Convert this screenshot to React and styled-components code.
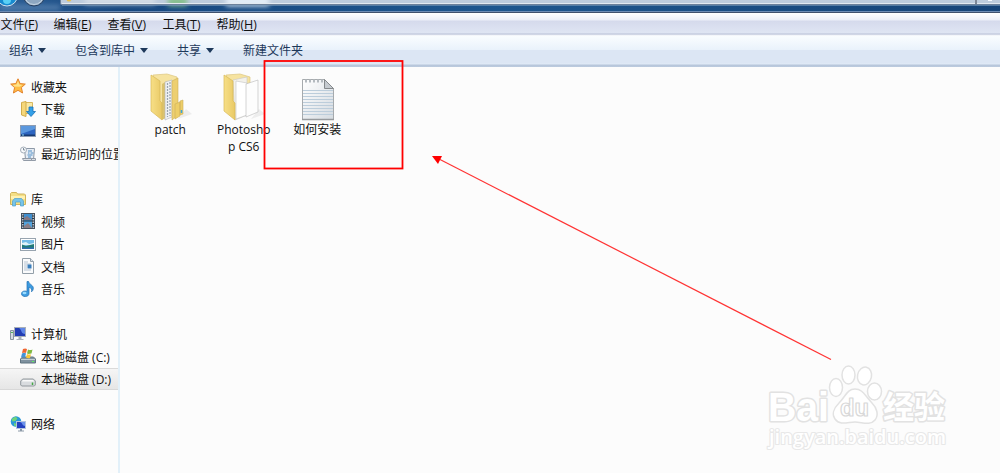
import React from 'react';
import styled, { createGlobalStyle } from 'styled-components';

const GlobalStyle = createGlobalStyle`
  * { box-sizing: border-box; }
  body {
    margin: 0;
    overflow: hidden;
    background: #fcfcfc;
    font-family: 'Open Sans', 'Noto Sans CJK SC', sans-serif;
    font-size: 12px;
    color: #111;
  }
  svg { display: block; }
`;

const Window = styled.div`
  position: relative;
  width: 1000px;
  height: 473px;
  display: flex;
  flex-direction: column;
  overflow: hidden;
`;

const TitleBar = styled.header`
  flex: none;
  height: 13px;
`;

const MenuBar = styled.nav`
  flex: none;
  height: 23px;
  display: flex;
  background: linear-gradient(#fff 0, #eceff8 7px, #d5daec 8px, #dfe5f3 20px, #b9c0d6 21px, #e8ecf5 22px, #fff 23px);
`;

const MenuItem = styled.span`
  width: ${({ $width }) => $width}px;
  padding-left: .5px;
  line-height: 24px;
  white-space: nowrap;
  u {
    font-size: 12.5px;
    text-underline-offset: 1px;
  }
`;

const ToolBar = styled.div`
  flex: none;
  height: 31px;
  display: flex;
  padding-left: 9px;
  background: linear-gradient(#fafdff 0, #e9f2fb 14px, #dce6f4 14px, #dce6f4 27px, #e1ebf7 28px, #b6c5da 29px, #bccbdf 31px);
  color: #1e395b;
`;

const ToolItem = styled.span`
  width: ${({ $width }) => $width}px;
  height: 28px;
  display: flex;
  align-items: center;
  gap: 5px;
  white-space: nowrap;
`;

const Caret = styled.i`
  border: 4px solid transparent;
  border-top: 5px solid #1e395b;
  border-bottom: 0;
`;

const Body = styled.div`
  flex: 1;
  display: flex;
  min-height: 0;
`;

const SideBar = styled.aside`
  flex: none;
  width: 120px;
  padding-top: 8px;
  border-right: 2px solid #e2f0f9;
  overflow: hidden;
`;

const Group = styled.section`
  margin-bottom: 22.5px;
`;

const SideRow = styled.div`
  height: 22.5px;
  display: flex;
  align-items: center;
  gap: 5px;
  padding-left: ${({ $child }) => ($child ? 20 : 10)}px;
  white-space: nowrap;
  background: ${({ $selected }) => ($selected ? 'linear-gradient(#f6f6f6, #e5e5e5)' : 'none')};
  box-shadow: ${({ $selected }) => ($selected ? 'inset 0 1px #dadada, inset 0 -1px #d8d8d8' : 'none')};
  svg { flex: none; }
  span { padding-top: 1px; }
`;

const Files = styled.main`
  flex: 1;
  display: flex;
  align-items: flex-start;
  padding: 5px 0 0 14px;
`;

const File = styled.div`
  width: 73.5px;
  display: flex;
  flex-direction: column;
  align-items: center;
  text-align: center;
  line-height: 17px;
`;

const FileName = styled.span`
  width: 60px;
  margin: -1px 1px 0 0;
  white-space: pre-line;
`;

const Overlay = styled.svg`
  position: absolute;
  inset: 0;
`;

const Icon = ({ children }) => <svg width="16" height="16" viewBox="0 0 16 16">{children}</svg>;

const icons = {
  star: (
    <Icon>
      <path d="M8 .8l2.1 4.8 5.2.5-3.9 3.5 1.2 5.4L8 12.3 3.4 15l1.2-5.4L.7 6.1l5.2-.5z" fill="#ffbd45" stroke="#e3832c" />
      <path d="M8 3l1.3 3.6 3.2.4-3 1.8L4 8.5 3 7l3.5-.5z" fill="#ffe38b" />
    </Icon>
  ),
  download: (
    <Icon>
      <path d="M5.5 1.5h7v11h-7z" fill="#fae9a4" stroke="#d6b75f" />
      <path d="M1.5 1.5l4.5-1v15l-4.5-1.5z" fill="#f5d77a" stroke="#d1ad4d" />
      <path d="M9 6h4v4.5h2.5L11 15.5 6.5 10.5H9z" fill="#34a0e8" stroke="#1870b8" strokeWidth=".8" />
    </Icon>
  ),
  desktop: (
    <Icon>
      <rect x=".5" y="2.5" width="15" height="11" fill="#2d65c0" stroke="#8c9cb2" />
      <path d="M1 3h14v3L1 11z" fill="#5b98de" />
      <path d="M1 11.5h14V13H1z" fill="#173a72" />
      <path d="M2 12h2" stroke="#8fdaf5" />
    </Icon>
  ),
  recent: (
    <Icon>
      <path d="M4.5 2.5h10l-1 11h-8z" fill="#e7edf4" stroke="#8d99a7" />
      <path d="M2.5 12.5h9v2h-8z M11.5 12.5h4v2h-4z" fill="#dce1e7" stroke="#929ba7" />
      <circle cx="3.5" cy="4" r="3" fill="#f7f9fb" stroke="#a4aeb9" />
      <path d="M3.5 2v2h1.5" fill="none" stroke="#637384" strokeWidth=".8" />
      <path d="M8 5h4M8 7h1.5m1 0h3M7.5 9h5M8 11h3" stroke="#508fc5" />
    </Icon>
  ),
  library: (
    <Icon>
      <path d="M.5 2.5l1-1h5l1 1.5h7l1 1v9.5H.5z" fill="#f4df86" stroke="#d1b45c" />
      <path d="M1 5h14v3H1z" fill="#fff1b1" />
      <path d="M2.5 15v-5l2-2.5h7l2 2.5v5h-3v-4h-5v4z" fill="#76c3e9" stroke="#4c9fcb" strokeWidth=".7" />
    </Icon>
  ),
  video: (
    <Icon>
      <rect x="1.5" y=".5" width="13" height="15" fill="#283643" stroke="#45515d" />
      <rect x="4" y="1" width="8" height="6.5" fill="#3f8fd0" />
      <rect x="4" y="8.5" width="8" height="6.5" fill="#52a3dd" />
      <path d="M4 5l3-2 5 4H4m0 6l4-3 4 5H4" fill="#b3684c" opacity=".6" />
      <path d="M2.8 1v14M13.2 1v14" stroke="#dce4ed" strokeWidth="1.2" strokeDasharray="1.5 1" />
    </Icon>
  ),
  picture: (
    <Icon>
      <rect x=".5" y="2.5" width="15" height="12" fill="#fff" stroke="#98a4af" />
      <rect x="2" y="4" width="12" height="9" fill="#74bce8" />
      <path d="M2 7l4-1 3 2 5-1v2H2z" fill="#dff3f8" />
      <path d="M2 8.5l4 1.5 8-2v5H2z" fill="#237b75" />
      <path d="M2 11.5h12V13H2z" fill="#306eae" />
    </Icon>
  ),
  document: (
    <Icon>
      <path d="M2.5.5h8l3 3v12h-11z" fill="#fafbfc" stroke="#939fa9" />
      <path d="M10.5.5v3h3" fill="#dce4eb" stroke="#939fa9" />
      <path d="M4 4h4M4 6h7M4 8h3M4 10h3M4 12h7" stroke="#b5c3d1" />
      <rect x="7.5" y="6.5" width="4" height="4" fill="#397ebc" />
    </Icon>
  ),
  music: (
    <Icon>
      <path d="M7 .5h1.6c.5 3 5.3 3.7 4.7 7.3-.3 1.5-.8 2.2-1.8 3 .8-2.4-.7-4-2.5-4.7v6.5c0 2-1.7 3-3.8 3s-3.7-1-3.7-2.8S3 10 5 10c.8 0 1.5.2 2 .5z" fill="#3d9be0" stroke="#206eb1" strokeWidth=".7" />
      <ellipse cx="4.5" cy="12" rx="2" ry="1.2" fill="#99dbff" />
    </Icon>
  ),
  computer: (
    <Icon>
      <path d="M.5 4.5h3v9h-3z" fill="#d6dce2" stroke="#89959f" />
      <path d="M1 6.5h2" stroke="#53b65c" />
      <rect x="4.5" y="1.5" width="11" height="9" fill="#243eb3" stroke="#a8afb8" />
      <path d="M9 2h6v6c-4 0-3-4-6-6z" fill="#5e86e7" />
      <path d="M8.5 11h3v2h2v1h-7v-1h2z" fill="#aab2bb" />
    </Icon>
  ),
  systemDrive: (
    <Icon>
      <path d="M2.5 9h11l2 2v4H.5v-4z" fill="#7f929f" stroke="#617480" />
      <path d="M1 11.5h14" stroke="#c2ced5" />
      <path d="M12 13.5h2" stroke="#5ded64" />
      <path d="M3 1c2-1 3-.5 4 0L6 5c-1-.5-2-.5-4 0z" fill="#ef6532" />
      <path d="M8 1.5c2 1 3 .5 4.500 0l-1 4C9 6 8 6 7 5.5z" fill="#80b941" />
      <path d="M2 5.5c2-.7 3-.5 4 0l-1 4c-1-.5-2-.5-4 0z" fill="#4393d9" />
      <path d="M7 6c1.500.8 3 .6 4 .3l-1 3.700c-1.500.4-3 .2-4-.5z" fill="#f9c637" />
    </Icon>
  ),
  drive: (
    <Icon>
      <path d="M.7 10l2-2h10.600l2 2v4l-1 1H1.700l-1-1z" fill="#d9dcdf" stroke="#92989d" />
      <path d="M3 9h10l1 1.500H2z" fill="#fafafa" />
      <path d="M12.500 11.500V14" stroke="#43a842" strokeWidth="1.5" />
    </Icon>
  ),
  network: (
    <Icon>
      <circle cx="6" cy="5.5" r="5.3" fill="#2999d9" />
      <path d="M1.5 3l4-2.5 2 2-2 2.500-3 .5zM4 7l3 1-1 2.500-2-1z" fill="#6ed37b" />
      <rect x="6.5" y="5.5" width="9" height="7" fill="#2341bf" stroke="#b3c4df" />
      <path d="M10 6h5v4c-3 0-2-3-5-4z" fill="#6b91ec" />
      <path d="M10 13h2v1.500h2v1H8v-1h2z" fill="#8b99a7" />
    </Icon>
  ),
};

const menus = [
  ['文件', 'F', 53],
  ['编辑', 'E', 54],
  ['查看', 'V', 55],
  ['工具', 'T', 54],
  ['帮助', 'H', 54],
];

const tools = [
  ['组织', true, 66],
  ['包含到库中', true, 102],
  ['共享', true, 66],
  ['新建文件夹', false, 80],
];

const groups = [
  [['star', '收藏夹'], ['download', '下载'], ['desktop', '桌面'], ['recent', '最近访问的位置']],
  [['library', '库'], ['video', '视频'], ['picture', '图片'], ['document', '文档'], ['music', '音乐']],
  [['computer', '计算机'], ['systemDrive', '本地磁盘 (C:)'], ['drive', '本地磁盘 (D:)', true]],
  [['network', '网络']],
];

const TitleArt = () => (
  <svg width="1000" height="13" viewBox="0 0 1000 13">
    <defs>
      <linearGradient id="frame">
        <stop offset="0" stopColor="#2d5f96" />
        <stop offset=".12" stopColor="#174880" />
        <stop offset=".5" stopColor="#1d568e" />
        <stop offset="1" stopColor="#164478" />
      </linearGradient>
      <filter id="glow" x="-50%" y="-200%" width="200%" height="500%"><feGaussianBlur stdDeviation="2.5" /></filter>
    </defs>
    <path d="M0 0h1000v13H0z" fill="url(#frame)" />
    <path d="M0 5h60v5H0z" fill="#7fa3c8" opacity=".5" filter="url(#glow)" />
    <path d="M60.5 0v3.5q0 1 1 1H1000V0z" fill="#bdccdd" />
    <path d="M85 -3h70v7H85z" fill="#d5dee7" filter="url(#glow)" />
    <path d="M168 -3h19v9h-19z" fill="#85bf8c" filter="url(#glow)" />
    <path d="M226 -3h43v9h-43z" fill="#e4eef8" filter="url(#glow)" />
    <path d="M60.5 0v3.5q0 1 1 1H1000" fill="none" stroke="#6c819b" />
    <path d="M62 3.5h938" stroke="#e3eaf1" />
    <path d="M62 5.5h938" stroke="#6f92b4" opacity=".7" />
    <circle cx="69" cy="-1" r="2.5" fill="#e5bd4f" />
    <path d="M976 0v4" stroke="#7d8796" strokeWidth="2" />
    <path d="M988 .5h4" stroke="#f8fbff" />
    <circle cx="7" cy="-4.5" r="10.5" fill="#178bd0" stroke="#d0e1ef" />
    <circle cx="7" cy="0" r="4" fill="#5ad0f5" />
    <circle cx="34" cy="-5" r="11" fill="#8ea7c1" stroke="#243e60" />
    <circle cx="34" cy="-5" r="9.5" fill="none" stroke="#c6d5e2" />
    <path d="M0 11.5h1000" stroke="#6d8cb5" />
    <path d="M0 12.5h1000" stroke="#40516d" />
  </svg>
);

const FolderIcon = ({ full }) => (
  <svg width="52" height="50" viewBox="0 0 52 50">
    <defs>
      <linearGradient id="flap">
        <stop stopColor="#f7df87" />
        <stop offset="1" stopColor="#e9c965" />
      </linearGradient>
    </defs>
    <path d="M33 47l14-5-6-5z" fill="#ededed" />
    <path d="M8 3l14-1 10 3v36l-15 6z" fill="#f6e3a0" stroke="#dcc67f" strokeWidth=".7" />
    {full ? (
      <>
        <path d="M17 12l5-3v36l-5 3z" fill="#dbc26e" />
        <path d="M20 10l7-2v37l-7 3z" fill="#eef0f2" stroke="#b3b6b9" strokeWidth=".6" />
        <path d="M22.5 11v34M25 10v34" stroke="#9aa5b0" strokeWidth="1.2" strokeDasharray="2 1" />
        <path d="M27 9l6-3v37l-6 5z" fill="#edcf70" stroke="#cdb05a" strokeWidth=".6" />
        <path d="M30 32l5-2v14l-5 3zM35 29l3-1v14l-3 1z" fill="#edce68" stroke="#cdb05a" strokeWidth=".6" />
        <path d="M36.5 38v3" stroke="#36a6db" strokeWidth="1.5" />
      </>
    ) : (
      <>
        <path d="M15 8l14-3v38l-12 5z" fill="#f3f1ea" stroke="#c6c6c6" strokeWidth=".6" />
        <path d="M18 9l11 2v32l-11 4z" fill="#fff" stroke="#c2c2c2" strokeWidth=".6" />
        <path d="M28 12l12-4v32l-12 5z" fill="#fdfdfd" stroke="#b8b8b8" strokeWidth=".6" />
      </>
    )}
    <path d="M6 3l9 6v20l2 2v17L6 39z" fill="url(#flap)" stroke="#d9b957" strokeWidth=".7" />
  </svg>
);

const NoteIcon = () => (
  <svg width="52" height="50" viewBox="0 0 52 50">
    <defs>
      <linearGradient id="paper" x2="1" y2="1">
        <stop stopColor="#fff" />
        <stop offset="1" stopColor="#d5dbe1" />
      </linearGradient>
    </defs>
    <path d="M10.5 7.5h22l9 9v31h-31z" fill="url(#paper)" stroke="#a6aaad" />
    {[18, 21, 24, 27, 30, 33, 36, 39, 42].map((y) => (
      <path key={y} d={`M11 ${y}.5h30`} stroke="#bccddb" />
    ))}
    <path d="M13 9h19" stroke="#b4babf" strokeWidth="3" strokeDasharray="2 2" />
    <path d="M32.5 7.5v9h9z" fill="#c6cbd0" stroke="#85898c" />
    <path d="M10 47.5h32" stroke="#979a9d" strokeWidth="1.5" />
  </svg>
);

const watermarkFont = 'Liberation Sans, Noto Sans CJK SC, sans-serif';

const Watermark = () => (
  <g fill="#fff" stroke="#e2e2e2" strokeWidth="1.5" strokeLinejoin="round">
    <g fontFamily={watermarkFont} fontWeight="700" paintOrder="stroke">
      <text x="768" y="421" fontSize="40" textLength="61" lengthAdjust="spacingAndGlyphs" strokeWidth="3">Bai</text>
      <text x="883" y="418" fontSize="31" textLength="62" lengthAdjust="spacingAndGlyphs" strokeWidth="3">经验</text>
      <text x="769" y="444" fontFamily="Open Sans, sans-serif" fontSize="19" textLength="177" lengthAdjust="spacingAndGlyphs" fontWeight="600" stroke="#e8e8e8" strokeWidth="2.2">jingyan.baidu.com</text>
    </g>
    <ellipse cx="836" cy="387.5" rx="6.5" ry="9" />
    <ellipse cx="848.5" cy="375" rx="6.5" ry="9" />
    <ellipse cx="864.5" cy="376" rx="7" ry="9" transform="rotate(12 864.5 376)" />
    <ellipse cx="874.5" cy="391.5" rx="7" ry="8.5" />
    <path d="M855 389c-8 0-9 7-16 14-6 6-7 12-4 16 5 7 13 3 20 3s15 4 20-2c4-5 2-12-3-17-7-7-9-14-17-14z" />
    <text x="840" y="416" fontFamily={watermarkFont} fontWeight="700" fontSize="24" textLength="29" lengthAdjust="spacingAndGlyphs" stroke="#d8d8d8" strokeWidth="1.2">du</text>
  </g>
);

const App = () => (
  <>
    <GlobalStyle />
    <Window>
      <TitleBar><TitleArt /></TitleBar>
      <MenuBar>
        {menus.map(([label, letter, width]) => (
          <MenuItem key={letter} $width={width}>{label}(<u>{letter}</u>)</MenuItem>
        ))}
      </MenuBar>
      <ToolBar>
        {tools.map(([label, caret, width]) => (
          <ToolItem key={label} $width={width}>{label}{caret && <Caret />}</ToolItem>
        ))}
      </ToolBar>
      <Body>
        <SideBar>
          {groups.map((rows) => (
            <Group key={rows[0][0]}>
              {rows.map(([icon, label, selected], i) => (
                <SideRow key={icon} $child={i > 0} $selected={selected}>
                  {icons[icon]}
                  <span>{label}</span>
                </SideRow>
              ))}
            </Group>
          ))}
        </SideBar>
        <Files>
          <File><FolderIcon full /><FileName>patch</FileName></File>
          <File><FolderIcon /><FileName>{'Photosho\np CS6'}</FileName></File>
          <File><NoteIcon /><FileName>如何安装</FileName></File>
        </Files>
      </Body>
      <Overlay width="1000" height="473" viewBox="0 0 1000 473">
        <Watermark />
        <rect x="264.5" y="61" width="138" height="107.5" fill="none" stroke="#f00" strokeWidth="1.8" />
        <path d="M440 159.5L831 359.5" stroke="#f33" strokeWidth="1.2" />
        <path d="M432 156h10l-4 8z" fill="#f00" />
      </Overlay>
    </Window>
  </>
);

export default App;
